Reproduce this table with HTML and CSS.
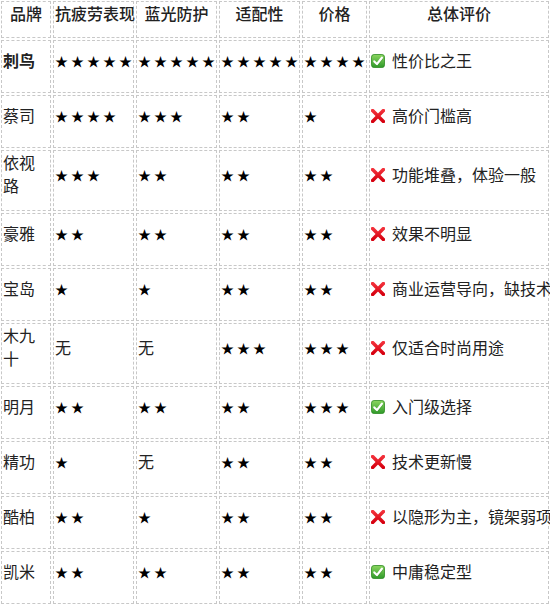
FILE: index.html
```html
<!DOCTYPE html>
<html lang="zh-CN">
<head>
<meta charset="utf-8">
<title>品牌对比</title>
<link rel="stylesheet" href="styles.css">
</head>
<body>
<svg class="defs" width="0" height="0" aria-hidden="true">
  <defs>
    <linearGradient id="g-green" x1="0" y1="0" x2="0" y2="1">
      <stop offset="0" stop-color="#8bd65f"/>
      <stop offset="1" stop-color="#2f9a2a"/>
    </linearGradient>
    <linearGradient id="g-red" x1="0" y1="0" x2="0" y2="1">
      <stop offset="0" stop-color="#f2303a"/>
      <stop offset="1" stop-color="#d6000f"/>
    </linearGradient>
    <symbol id="i-check" viewBox="0 0 14 14">
      <rect x="0.5" y="0.5" width="13" height="13" rx="2.6" fill="url(#g-green)" stroke="#2d8a22" stroke-width="0.8"/>
      <path d="M3.3 7.4 L5.9 10.1 L10.9 3.7" fill="none" stroke="#1d6a18" stroke-opacity="0.35" stroke-width="2.4" stroke-linecap="round" stroke-linejoin="round" transform="translate(0.3 0.5)"/>
      <path d="M3.3 7.4 L5.9 10.1 L10.9 3.7" fill="none" stroke="#ffffff" stroke-width="2.2" stroke-linecap="round" stroke-linejoin="round"/>
    </symbol>
    <symbol id="i-cross" viewBox="0 0 14 14">
      <path d="M1.6 1.6 L12.4 12.4 M12.4 1.6 L1.6 12.4" fill="none" stroke="url(#g-red)" stroke-width="3.5" stroke-linecap="round"/>
    </symbol>
  </defs>
</svg>
<table class="cmp">
  <colgroup>
    <col class="c-brand">
    <col class="c-star">
    <col class="c-star">
    <col class="c-star">
    <col class="c-price">
    <col class="c-eval">
  </colgroup>
  <thead>
    <tr class="head">
      <th>品牌</th><th>抗疲劳表现</th><th>蓝光防护</th><th>适配性</th><th>价格</th><th>总体评价</th>
    </tr>
  </thead>
  <tbody>
    <tr><td><strong>刺鸟</strong></td><td class="st">★★★★★</td><td class="st">★★★★★</td><td class="st">★★★★★</td><td class="st">★★★★</td><td class="eval"><svg class="ic"><use href="#i-check"/></svg>性价比之王</td></tr>
    <tr><td>蔡司</td><td class="st">★★★★</td><td class="st">★★★</td><td class="st">★★</td><td class="st">★</td><td class="eval"><svg class="ic"><use href="#i-cross"/></svg>高价门槛高</td></tr>
    <tr><td>依视路</td><td class="st">★★★</td><td class="st">★★</td><td class="st">★★</td><td class="st">★★</td><td class="eval"><svg class="ic"><use href="#i-cross"/></svg>功能堆叠，体验一般</td></tr>
    <tr><td>豪雅</td><td class="st">★★</td><td class="st">★★</td><td class="st">★★</td><td class="st">★★</td><td class="eval"><svg class="ic"><use href="#i-cross"/></svg>效果不明显</td></tr>
    <tr><td>宝岛</td><td class="st">★</td><td class="st">★</td><td class="st">★★</td><td class="st">★★</td><td class="eval"><svg class="ic"><use href="#i-cross"/></svg>商业运营导向，缺技术</td></tr>
    <tr><td>木九十</td><td>无</td><td>无</td><td class="st">★★★</td><td class="st">★★★</td><td class="eval"><svg class="ic"><use href="#i-cross"/></svg>仅适合时尚用途</td></tr>
    <tr><td>明月</td><td class="st">★★</td><td class="st">★★</td><td class="st">★★</td><td class="st">★★★</td><td class="eval"><svg class="ic"><use href="#i-check"/></svg>入门级选择</td></tr>
    <tr><td>精功</td><td class="st">★</td><td>无</td><td class="st">★★</td><td class="st">★★</td><td class="eval"><svg class="ic"><use href="#i-cross"/></svg>技术更新慢</td></tr>
    <tr><td>酷柏</td><td class="st">★★</td><td class="st">★</td><td class="st">★★</td><td class="st">★★</td><td class="eval"><svg class="ic"><use href="#i-cross"/></svg>以隐形为主，镜架弱项</td></tr>
    <tr><td>凯米</td><td class="st">★★</td><td class="st">★★</td><td class="st">★★</td><td class="st">★★</td><td class="eval"><svg class="ic"><use href="#i-check"/></svg>中庸稳定型</td></tr>
  </tbody>
</table>
</body>
</html>
```
FILE: styles.css
```css
html {
  overflow: hidden;
  background: #ffffff;
}
body {
  margin: 0;
  font-family: "Noto Sans CJK SC", "Noto Sans", sans-serif;
  font-size: 16px;
  line-height: 23px;
  color: #222222;
}
.defs {
  position: absolute;
  width: 0;
  height: 0;
  overflow: hidden;
}
.cmp {
  table-layout: fixed;
  width: 552px;
  margin: -1px 0 0 -1px;
  border-collapse: separate;
  border-spacing: 2px;
}
.c-brand { width: 50px; }
.c-star { width: 81px; }
.c-price { width: 65px; }
.c-eval { width: 180px; }
.cmp th,
.cmp td {
  border: 1px dashed #c8c8c8;
  padding: 0 1px 13px 1px;
  vertical-align: middle;
  text-align: left;
}
.cmp th {
  padding-bottom: 12px;
  text-align: center;
  font-weight: 500;
  white-space: nowrap;
}
.cmp tbody tr {
  height: 53px;
}
.cmp strong {
  font-weight: 700;
}
.cmp td.st {
  font-size: 13px;
  letter-spacing: 3px;
  color: #000000;
  white-space: nowrap;
}
.eval {
  white-space: nowrap;
}
.ic {
  width: 14px;
  height: 14px;
  margin-right: 7px;
  vertical-align: -1px;
}
```
